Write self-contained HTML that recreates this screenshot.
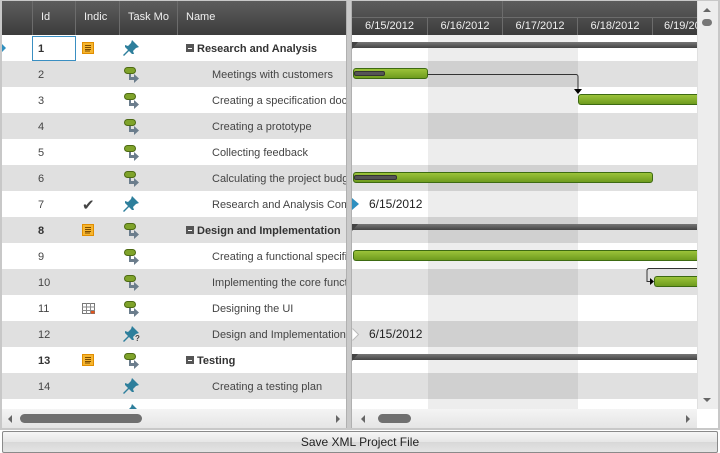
<!DOCTYPE html>
<html><head><meta charset="utf-8"><style>
*{margin:0;padding:0;box-sizing:border-box}
body{width:720px;height:453px;overflow:hidden;background:#fff;font-family:"Liberation Sans",sans-serif;font-size:11px;color:#444;position:relative}
.a{position:absolute}
.hd{background:linear-gradient(#5e5e5e,#3c3c3c);color:#f0f0f0;font-size:11px}
.hc{position:absolute;top:0;height:35px;line-height:35px;padding-left:8px;border-left:1px solid #6c6c6c;overflow:hidden;white-space:nowrap}
.row{position:absolute;left:0;height:26px;width:346px}
.g{background:#e0e0e0}
.c{position:absolute;top:1px;height:26px;line-height:26px;white-space:nowrap;overflow:hidden}
.id{left:38px;width:35px}
.nm{left:212px;width:134px}
.b{font-weight:bold;color:#333}
.rr{position:absolute;left:352px;width:345px;height:26px}
.bar{position:absolute;height:11px;border:1px solid #3d6a12;border-radius:3px;background:linear-gradient(#9cc33a,#6f9c1e)}
.sum{position:absolute;height:6px;background:linear-gradient(#777,#444);left:352px;width:345px}
.prog{position:absolute;height:5px;border-radius:2px;background:#555;border:1px solid #333}
.ms{font-size:12px;color:#222}
</style></head><body>
<svg width="0" height="0" style="position:absolute">
<defs>
<g id="auto"><rect x="0.5" y="0.5" width="11" height="6" rx="3" fill="#7fa32a" stroke="#4d6a13"/><rect x="5" y="7" width="2" height="6" fill="#6b7d8c"/><path d="M5 10h5v-3l5 4.5-5 4.5v-3h-5z" fill="#6b7d8c"/></g>
<g id="pin"><path d="M9 1l7 7-3 1-3 3 1 3-2 0-3-3-5 5-1-1 5-5-3-3 0-2 3 1 3-3z" fill="#2e7f9c"/></g>
<g id="note"><rect x="0.5" y="0.5" width="11" height="11" fill="#f6b52e" stroke="#e08d00"/><path d="M3 3.5h6M3 5.5h6M3 7.5h6M3 9h5" stroke="#7a4a00" stroke-width="0.9"/></g>
</defs></svg>

<div class="row" style="top:35px"><div class="a" style="left:0;top:7px;width:0;height:0;border-top:6px solid transparent;border-bottom:6px solid transparent;border-left:6px solid #2e8fbf"></div><div class="a" style="left:32px;top:1px;width:44px;height:25px;border:1px solid #3a8fc2"></div><div class="c id b">1</div><svg class="a" style="left:82px;top:7px" width="13" height="13"><use href="#note"/></svg><svg class="a" style="left:123px;top:4px" width="18" height="18"><use href="#pin"/></svg><div class="a" style="left:186px;top:9px;width:8px;height:8px;background:#555"><div style="position:absolute;left:2px;top:3.5px;width:4px;height:1px;background:#fff"></div></div><div class="c b" style="left:197px;width:149px">Research and Analysis</div></div>
<div class="row g" style="top:61px"><div class="c id">2</div><svg class="a" style="left:124px;top:6px" width="17" height="17"><use href="#auto"/></svg><div class="c nm">Meetings with customers</div></div>
<div class="row" style="top:87px"><div class="c id">3</div><svg class="a" style="left:124px;top:6px" width="17" height="17"><use href="#auto"/></svg><div class="c nm">Creating a specification doc</div></div>
<div class="row g" style="top:113px"><div class="c id">4</div><svg class="a" style="left:124px;top:6px" width="17" height="17"><use href="#auto"/></svg><div class="c nm">Creating a prototype</div></div>
<div class="row" style="top:139px"><div class="c id">5</div><svg class="a" style="left:124px;top:6px" width="17" height="17"><use href="#auto"/></svg><div class="c nm">Collecting feedback</div></div>
<div class="row g" style="top:165px"><div class="c id">6</div><svg class="a" style="left:124px;top:6px" width="17" height="17"><use href="#auto"/></svg><div class="c nm">Calculating the project budget</div></div>
<div class="row" style="top:191px"><div class="c id">7</div><div class="a" style="left:82px;top:5px;font-size:15px;color:#444">✔</div><svg class="a" style="left:123px;top:4px" width="18" height="18"><use href="#pin"/></svg><div class="c nm">Research and Analysis Completed</div></div>
<div class="row g" style="top:217px"><div class="c id b">8</div><svg class="a" style="left:82px;top:7px" width="13" height="13"><use href="#note"/></svg><svg class="a" style="left:124px;top:6px" width="17" height="17"><use href="#auto"/></svg><div class="a" style="left:186px;top:9px;width:8px;height:8px;background:#555"><div style="position:absolute;left:2px;top:3.5px;width:4px;height:1px;background:#fff"></div></div><div class="c b" style="left:197px;width:149px">Design and Implementation</div></div>
<div class="row" style="top:243px"><div class="c id">9</div><svg class="a" style="left:124px;top:6px" width="17" height="17"><use href="#auto"/></svg><div class="c nm">Creating a functional specification</div></div>
<div class="row g" style="top:269px"><div class="c id">10</div><svg class="a" style="left:124px;top:6px" width="17" height="17"><use href="#auto"/></svg><div class="c nm">Implementing the core functionality</div></div>
<div class="row" style="top:295px"><div class="c id">11</div><svg class="a" style="left:82px;top:8px" width="13" height="11"><rect x="0.5" y="0.5" width="12" height="10" fill="#fff" stroke="#777"/><path d="M0 4h13M0 7.5h13M4.5 0v11M8.5 0v11" stroke="#888"/><rect x="9" y="8" width="3.5" height="2.5" fill="#e0541c"/></svg><svg class="a" style="left:124px;top:6px" width="17" height="17"><use href="#auto"/></svg><div class="c nm">Designing the UI</div></div>
<div class="row g" style="top:321px"><div class="c id">12</div><svg class="a" style="left:123px;top:4px" width="18" height="18"><use href="#pin"/></svg><div class="a" style="left:135px;top:13px;font-size:8px;font-weight:bold">?</div><div class="c nm">Design and Implementation Completed</div></div>
<div class="row" style="top:347px"><div class="c id b">13</div><svg class="a" style="left:82px;top:7px" width="13" height="13"><use href="#note"/></svg><svg class="a" style="left:124px;top:6px" width="17" height="17"><use href="#auto"/></svg><div class="a" style="left:186px;top:9px;width:8px;height:8px;background:#555"><div style="position:absolute;left:2px;top:3.5px;width:4px;height:1px;background:#fff"></div></div><div class="c b" style="left:197px;width:149px">Testing</div></div>
<div class="row g" style="top:373px"><div class="c id">14</div><svg class="a" style="left:123px;top:4px" width="18" height="18"><use href="#pin"/></svg><div class="c nm">Creating a testing plan</div></div>
<div class="row" style="top:399px;height:10px;overflow:hidden"><svg class="a" style="left:123px;top:4px" width="18" height="18"><use href="#pin"/></svg></div>

<div class="rr" style="top:61px;background:#e0e0e0"></div>
<div class="rr" style="top:113px;background:#e0e0e0"></div>
<div class="rr" style="top:165px;background:#e0e0e0"></div>
<div class="rr" style="top:217px;background:#e0e0e0"></div>
<div class="rr" style="top:269px;background:#e0e0e0"></div>
<div class="rr" style="top:321px;background:#e0e0e0"></div>
<div class="rr" style="top:373px;background:#e0e0e0"></div>
<div class="a" style="left:428px;top:35px;width:150px;height:374px;background:rgba(0,0,0,0.07)"></div>

<div class="sum" style="top:42px"></div><div class="a" style="left:352px;top:42px;border-left:6px solid #444;border-bottom:7px solid transparent"></div>
<div class="bar" style="left:353px;top:68px;width:75px"></div><div class="prog" style="left:354px;top:71px;width:31px"></div>
<svg class="a" style="left:428px;top:70px" width="160" height="26"><path d="M0 4.5h148a2 2 0 0 1 2 2v16" fill="none" stroke="#333"/><path d="M146 19h8l-4 5z" fill="#000"/></svg>
<div class="bar" style="left:578px;top:94px;width:119px;border-right:none;border-radius:3px 0 0 3px"></div>
<div class="bar" style="left:353px;top:172px;width:300px"></div><div class="prog" style="left:354px;top:175px;width:43px"></div>
<div class="a" style="left:352px;top:198px;width:0;height:0;border-top:6px solid transparent;border-bottom:6px solid transparent;border-left:7px solid #2e8fbf"></div><div class="a ms" style="left:369px;top:197px">6/15/2012</div>
<div class="sum" style="top:224px"></div><div class="a" style="left:352px;top:224px;border-left:6px solid #444;border-bottom:7px solid transparent"></div>
<div class="bar" style="left:353px;top:250px;width:344px;border-right:none;border-radius:3px 0 0 3px"></div>
<svg class="a" style="left:640px;top:266px" width="60" height="22"><path d="M60 2.5H9a2 2 0 0 0-2 2v11h4" fill="none" stroke="#333"/><path d="M10 12l4 3.5-4 3.5z" fill="#000"/></svg>
<div class="bar" style="left:654px;top:276px;width:43px;border-right:none;border-radius:3px 0 0 3px"></div>
<div class="a" style="left:352px;top:328px;width:7px;height:12px"><svg width="8" height="13"><path d="M0.5 0.5l6 6-6 6" fill="#fff" stroke="#bbb"/></svg></div><div class="a ms" style="left:369px;top:327px">6/15/2012</div>
<div class="sum" style="top:354px"></div><div class="a" style="left:352px;top:354px;border-left:6px solid #444;border-bottom:7px solid transparent"></div>

<div class="a hd" style="left:0;top:0;width:346px;height:35px">
<div class="hc" style="left:32px;width:43px">Id</div>
<div class="hc" style="left:75px;width:44px">Indic</div>
<div class="hc" style="left:119px;width:58px">Task Mo</div>
<div class="hc" style="left:177px;width:169px">Name</div>
</div>
<div class="a hd" style="left:352px;top:0;width:345px;height:35px">
<div class="a" style="left:0;top:17px;width:345px;height:1px;background:#6c6c6c"></div>
<div class="a" style="left:150px;top:0;width:1px;height:17px;background:#6c6c6c"></div>
<div class="a" style="left:0;top:18px;width:75px;height:17px;line-height:17px;text-align:center">6/15/2012</div>
<div class="a" style="left:75px;top:18px;width:75px;height:17px;line-height:17px;text-align:center;border-left:1px solid #6c6c6c">6/16/2012</div>
<div class="a" style="left:150px;top:18px;width:75px;height:17px;line-height:17px;text-align:center;border-left:1px solid #6c6c6c">6/17/2012</div>
<div class="a" style="left:225px;top:18px;width:75px;height:17px;line-height:17px;text-align:center;border-left:1px solid #6c6c6c">6/18/2012</div>
<div class="a" style="left:300px;top:18px;width:45px;height:17px;line-height:17px;padding-left:11px;border-left:1px solid #6c6c6c;overflow:hidden;white-space:nowrap">6/19/2012</div>
</div>

<div class="a" style="left:346px;top:0;width:6px;height:429px;background:#c9c9c9;border-left:1px solid #b0b0b0;border-right:1px solid #b0b0b0"></div>

<div class="a" style="left:697px;top:0;width:21px;height:409px;background:#ededed;border-left:1px solid #e0e0e0"></div>
<div class="a" style="left:703px;top:8px;border-left:4px solid transparent;border-right:4px solid transparent;border-bottom:4px solid #666"></div>
<div class="a" style="left:702px;top:19px;width:10px;height:7px;border-radius:4px;background:#777"></div>
<div class="a" style="left:703px;top:398px;border-left:4px solid transparent;border-right:4px solid transparent;border-top:4px solid #666"></div>

<div class="a" style="left:2px;top:409px;width:344px;height:20px;background:linear-gradient(#f4f4f4,#e4e4e4)"></div>
<div class="a" style="left:8px;top:415px;border-top:4px solid transparent;border-bottom:4px solid transparent;border-right:4px solid #666"></div>
<div class="a" style="left:20px;top:414px;width:122px;height:9px;border-radius:5px;background:#707070"></div>
<div class="a" style="left:336px;top:415px;border-top:4px solid transparent;border-bottom:4px solid transparent;border-left:4px solid #666"></div>
<div class="a" style="left:352px;top:409px;width:345px;height:20px;background:linear-gradient(#f4f4f4,#e4e4e4)"></div>
<div class="a" style="left:361px;top:415px;border-top:4px solid transparent;border-bottom:4px solid transparent;border-right:4px solid #666"></div>
<div class="a" style="left:378px;top:414px;width:33px;height:9px;border-radius:5px;background:#707070"></div>
<div class="a" style="left:686px;top:415px;border-top:4px solid transparent;border-bottom:4px solid transparent;border-left:4px solid #666"></div>

<div class="a" style="left:0;top:0;width:720px;height:430px;border:2px solid #c8c8c8;border-top:1px solid #c8c8c8;pointer-events:none"></div>

<div class="a" style="left:2px;top:431px;width:716px;height:22px;border:1px solid #8a8a8a;border-radius:2px;background:linear-gradient(#f6f6f6 0%,#e6e6e6 50%,#d8d8d8 51%,#e4e4e4 100%);text-align:center;line-height:20px;font-size:12px;color:#222">Save XML Project File</div>
</body></html>
